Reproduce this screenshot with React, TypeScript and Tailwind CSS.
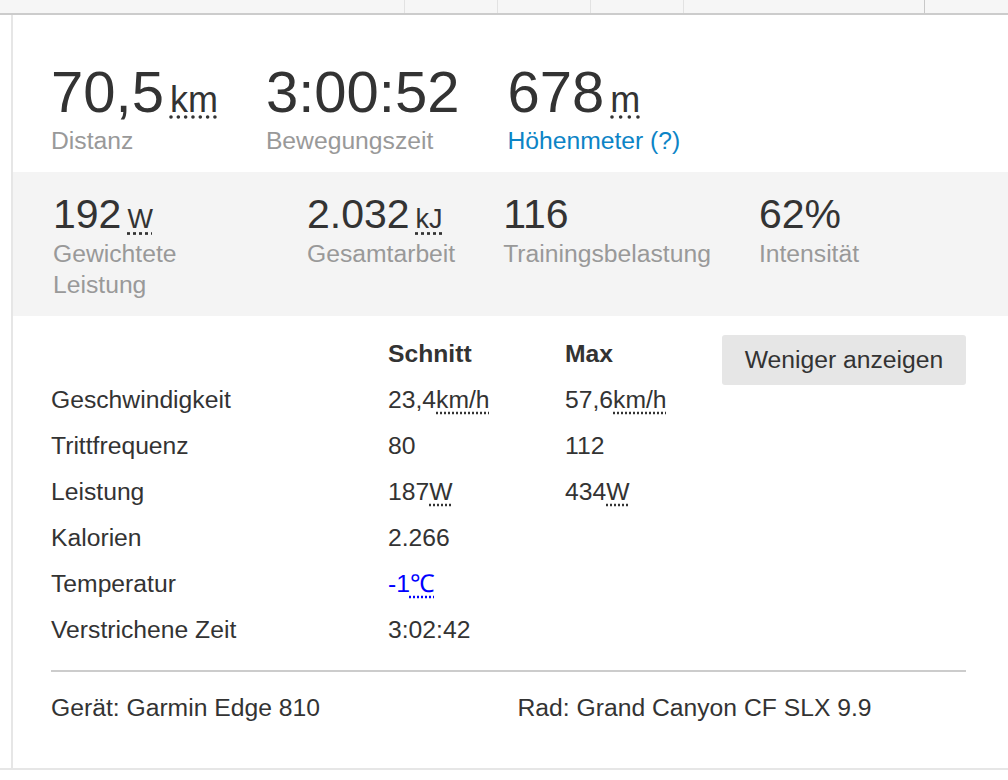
import React from 'react';

type Stat = {
  value: string;
  unit?: string;
  label: string;
  link?: boolean;
};

const TOP_STATS: Stat[] = [
  { value: '70,5', unit: 'km', label: 'Distanz' },
  { value: '3:00:52', label: 'Bewegungszeit' },
  { value: '678', unit: 'm', label: 'Höhenmeter (?)', link: true },
];

const POWER_STATS: Stat[] = [
  { value: '192', unit: 'W', label: 'Gewichtete Leistung' },
  { value: '2.032', unit: 'kJ', label: 'Gesamtarbeit' },
  { value: '116', label: 'Trainingsbelastung' },
  { value: '62%', label: 'Intensität' },
];

type Row = {
  label: string;
  avg: string;
  avgUnit?: string;
  max?: string;
  maxUnit?: string;
  cold?: boolean;
};

const ROWS: Row[] = [
  { label: 'Geschwindigkeit', avg: '23,4', avgUnit: 'km/h', max: '57,6', maxUnit: 'km/h' },
  { label: 'Trittfrequenz', avg: '80', max: '112' },
  { label: 'Leistung', avg: '187', avgUnit: 'W', max: '434', maxUnit: 'W' },
  { label: 'Kalorien', avg: '2.266' },
  { label: 'Temperatur', avg: '-1', avgUnit: '℃', cold: true },
  { label: 'Verstrichene Zeit', avg: '3:02:42' },
];

const Unit: React.FC<{ children: React.ReactNode; className?: string }> = ({ children, className = '' }) => (
  <span className={`underline decoration-dotted underline-offset-[4px] ${className}`}>{children}</span>
);

const Cell: React.FC<{ value?: string; unit?: string; cold?: boolean }> = ({ value, unit, cold }) => {
  if (!value) return <div />;
  return (
    <div className={cold ? 'text-[#0000ff]' : ''}>
      {value}
      {unit && <Unit>{unit}</Unit>}
    </div>
  );
};

const App: React.FC = () => {
  return (
    <div className="min-h-screen bg-white text-[#333] font-['Liberation_Sans',Arial,sans-serif]">
      {/* tab strip remnant */}
      <div className="h-[15px] bg-[#f6f6f6] border-b-2 border-[#cccccc] flex">
        <div className="w-[404px]" />
        <div className="w-[93px] border-l border-[#e2e2e2]" />
        <div className="w-[93px] border-l border-[#e2e2e2]" />
        <div className="w-[93px] border-l border-[#e2e2e2]" />
        <div className="w-[241px] border-l border-[#e2e2e2]" />
        <div className="flex-1 border-l border-[#c8c8c8]" />
      </div>

      <div className="border-b-2 border-[#e6e6e6]">
        <div className="ml-[11px] border-l-2 border-[#e6e6e6]">
          {/* headline stats */}
          <div className="flex gap-[48px] pl-[38px] pt-[48px] pb-[16px]">
            {TOP_STATS.map(s => (
              <div key={s.label}>
                <div className="flex items-baseline">
                  <span className="text-[58px] leading-none">{s.value}</span>
                  {s.unit && <Unit className="ml-[6px] text-[36px] leading-none">{s.unit}</Unit>}
                </div>
                <div
                  className={`mt-[4px] text-[24.7px] leading-[31px] ${s.link ? 'text-[#0c84c6]' : 'text-[#999]'}`}
                >
                  {s.label}
                </div>
              </div>
            ))}
          </div>

          {/* power stats */}
          <div className="flex gap-[48px] bg-[#f4f4f4] pl-[40px] pt-[22px] pb-[16px]">
            {POWER_STATS.map((s, i) => (
              <div key={s.label} className={i === 0 ? 'w-[206px]' : ''}>
                <div className="flex items-baseline">
                  <span className="text-[41px] leading-none">{s.value}</span>
                  {s.unit && <Unit className="ml-[6px] text-[27px] leading-none">{s.unit}</Unit>}
                </div>
                <div className="mt-[3px] text-[24.7px] leading-[31px] text-[#999]">{s.label}</div>
              </div>
            ))}
          </div>

          {/* details table */}
          <div className="pl-[38px] pr-[42px] pt-[15px] pb-[45px] text-[24.7px]">
            <div className="flex items-start">
              <div className="flex-1 grid grid-cols-[337px_177px_1fr] leading-[46px]">
                <div />
                <div className="font-bold">Schnitt</div>
                <div className="font-bold">Max</div>
                {ROWS.map(r => (
                  <React.Fragment key={r.label}>
                    <div>{r.label}</div>
                    <Cell value={r.avg} unit={r.avgUnit} cold={r.cold} />
                    <Cell value={r.max} unit={r.maxUnit} />
                  </React.Fragment>
                ))}
              </div>
              <button className="mt-[4px] h-[50px] w-[244px] rounded-[3px] bg-[#e6e6e6] text-[24.7px] text-[#333]">
                Weniger anzeigen
              </button>
            </div>

            <div className="mt-[17px] h-[2px] bg-[#cccccc]" />

            <div className="mt-[20px] grid grid-cols-2 gap-[18px] leading-[31px]">
              <div>Gerät: Garmin Edge 810</div>
              <div>Rad: Grand Canyon CF SLX 9.9</div>
            </div>
          </div>
        </div>
      </div>
    </div>
  );
};

export default App;
